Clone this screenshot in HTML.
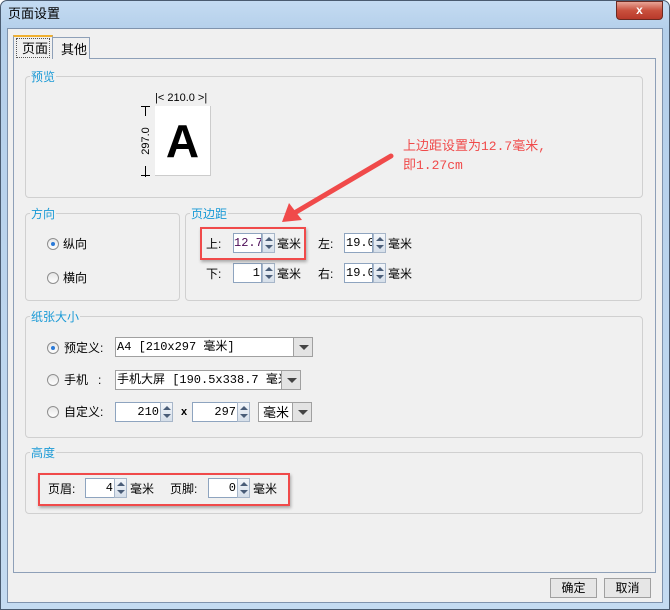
<!DOCTYPE html>
<html><head><meta charset="utf-8"><style>
*{margin:0;padding:0;box-sizing:border-box}
body{width:670px;height:610px;overflow:hidden;background:#fff;font-family:"Liberation Sans","Noto Sans CJK SC",sans-serif;font-size:12px;color:#000;position:relative;line-height:14px}
.abs{position:absolute}
.win{left:0;top:0;width:670px;height:610px;background:linear-gradient(180deg,#c4dbf2 0,#b4cfea 30px,#c4dbf1 100%);border:1px solid #4a5b70;border-radius:7px 7px 0 0}
.client{left:7px;top:28px;width:656px;height:575px;background:#f0f0f0;border:1px solid #7f93ad}
.grp{border:1px solid #d0d0d0;border-radius:4px}
.lg{background:#f0f0f0;color:#1a9ad6;padding:0 1px;font-size:12px}
.inp{background:#fff;border:1px solid #8ea4bf;height:20px;text-align:right;padding:2px 1px 0 0;font-family:"Liberation Mono",monospace;font-size:12px;line-height:14px;overflow:hidden;white-space:nowrap}
.sp{width:13px;height:20px;background:linear-gradient(#f3f6fa,#d6dfea);border:1px solid #a7b6c9}
.sp:before,.sp:after{content:"";position:absolute;left:2px;border-left:4px solid transparent;border-right:4px solid transparent}
.sp:before{top:3px;border-bottom:4px solid #4a5d78}
.sp:after{top:11px;border-top:4px solid #4a5d78}
.combo{background:#fff;border:1px solid #a0a0a0;height:20px;padding:2px 0 0 1px;font-family:"Liberation Mono","Noto Sans CJK SC",monospace;font-size:12px;line-height:14px;white-space:nowrap;overflow:hidden}
.cb{width:20px;height:20px;background:#e3e3e3;border:1px solid #a0a0a0}
.cb:after{content:"";position:absolute;left:5px;top:7px;border-left:5px solid transparent;border-right:5px solid transparent;border-top:5px solid #444}
.radio{width:12px;height:12px;border-radius:50%;border:1px solid #8f8f8f;background:linear-gradient(#e6e6e6,#fff)}
.radio.on:after{content:"";position:absolute;left:3px;top:3px;width:4px;height:4px;border-radius:50%;background:#2a7ad8}
.red{border:2px solid #f04a4a;box-shadow:1px 2px 3px rgba(0,0,0,.3)}
.btn{width:47px;height:20px;border:1px solid #a0a0a0;background:#e6e6e6;text-align:center;line-height:18px}
</style></head><body>
<div class="abs win"></div>
<div class="abs" style="left:8px;top:7px;font-size:13px">页面设置</div>
<div class="abs" style="left:616px;top:1px;width:47px;height:19px;border:1px solid #6b2a22;border-radius:0 0 4px 4px;background:linear-gradient(#e8a597,#c9503d 50%,#b8392a);color:#fff;text-align:center;font-weight:bold;font-size:12px;line-height:17px">x</div>
<div class="abs client"></div>
<div class="abs" style="left:13px;top:58px;width:643px;height:515px;border:1px solid #8ea0b8"></div>
<div class="abs" style="left:52px;top:37px;width:38px;height:22px;border:1px solid #8ea0b8;border-bottom:none;background:#f0f0f0;padding:5px 0 0 8px;font-size:13px">其他</div>
<div class="abs" style="left:13px;top:35px;width:40px;height:24px;border:1px solid #8ea0b8;border-top:2px solid #f0b030;border-bottom:none;background:#f0f0f0;font-size:13px"><div style="margin:1px 2px;border:1px dotted #555;height:20px;padding:3px 0 0 5px">页面</div></div>
<div class="abs grp" style="left:25px;top:76px;width:618px;height:122px"></div>
<div class="abs lg" style="left:30px;top:70px">预览</div>
<div class="abs" style="left:155px;top:91px;font-size:11px;white-space:nowrap">|&lt; 210.0 &gt;|</div>
<div class="abs" style="left:155px;top:106px;width:56px;height:70px;background:#fff;border-right:1px solid #ccc;border-bottom:1px solid #ccc;font-weight:bold;font-size:46px;text-align:center;line-height:70px;font-family:'Liberation Sans',sans-serif">A</div>
<div class="abs" style="left:141px;top:106px;width:9px;height:70px;border-top:1px solid #000;border-bottom:1px solid #000"><div class="abs" style="left:4px;top:0;width:1px;height:70px;background:#000"></div></div>
<div class="abs" style="left:121px;top:134px;width:50px;background:#f0f0f0;font-size:11px;text-align:center;transform:rotate(-90deg)">297.0</div>
<div class="abs grp" style="left:25px;top:213px;width:155px;height:88px"></div>
<div class="abs lg" style="left:30px;top:207px">方向</div>
<div class="abs radio on" style="left:47px;top:238px"></div><div class="abs" style="left:63px;top:237px">纵向</div>
<div class="abs radio" style="left:47px;top:272px"></div><div class="abs" style="left:63px;top:271px">横向</div>
<div class="abs grp" style="left:185px;top:213px;width:457px;height:88px"></div>
<div class="abs lg" style="left:190px;top:207px">页边距</div>
<div class="abs" style="left:206px;top:237px">上:</div><div class="abs inp" style="left:233px;top:233px;width:29px;color:#4b0a55">12.7</div><div class="abs sp" style="left:262px;top:233px"></div><div class="abs" style="left:277px;top:237px">毫米</div>
<div class="abs" style="left:318px;top:237px">左:</div><div class="abs inp" style="left:344px;top:233px;width:29px;text-align:left;padding-left:1px">19.05</div><div class="abs sp" style="left:373px;top:233px"></div><div class="abs" style="left:388px;top:237px">毫米</div>
<div class="abs" style="left:206px;top:267px">下:</div><div class="abs inp" style="left:233px;top:263px;width:29px">1</div><div class="abs sp" style="left:262px;top:263px"></div><div class="abs" style="left:277px;top:267px">毫米</div>
<div class="abs" style="left:318px;top:267px">右:</div><div class="abs inp" style="left:344px;top:263px;width:29px;text-align:left;padding-left:1px">19.05</div><div class="abs sp" style="left:373px;top:263px"></div><div class="abs" style="left:388px;top:267px">毫米</div>
<div class="abs red" style="left:200px;top:227px;width:106px;height:33px"></div>
<div class="abs grp" style="left:25px;top:316px;width:618px;height:122px"></div>
<div class="abs lg" style="left:30px;top:310px">纸张大小</div>
<div class="abs radio on" style="left:47px;top:342px"></div><div class="abs" style="left:64px;top:341px">预定义:</div>
<div class="abs combo" style="left:115px;top:337px;width:179px">A4 [210x297 毫米]</div><div class="abs cb" style="left:293px;top:337px"></div>
<div class="abs radio" style="left:47px;top:374px"></div><div class="abs" style="left:64px;top:373px">手机&nbsp;&nbsp;&nbsp;:</div>
<div class="abs combo" style="left:115px;top:370px;width:167px">手机大屏 [190.5x338.7 毫米]</div><div class="abs cb" style="left:281px;top:370px"></div>
<div class="abs radio" style="left:47px;top:406px"></div><div class="abs" style="left:64px;top:405px">自定义:</div>
<div class="abs inp" style="left:115px;top:402px;width:46px">210</div><div class="abs sp" style="left:160px;top:402px"></div>
<div class="abs" style="left:181px;top:405px;font-weight:bold;font-size:11px">x</div>
<div class="abs inp" style="left:192px;top:402px;width:46px">297</div><div class="abs sp" style="left:237px;top:402px"></div>
<div class="abs combo" style="left:258px;top:402px;width:35px;padding-left:4px;font-family:'Liberation Sans','Noto Sans CJK SC',sans-serif;font-size:13px;line-height:15px">毫米</div><div class="abs cb" style="left:292px;top:402px"></div>
<div class="abs grp" style="left:25px;top:452px;width:618px;height:62px"></div>
<div class="abs lg" style="left:30px;top:446px">高度</div>
<div class="abs" style="left:48px;top:482px">页眉:</div><div class="abs inp" style="left:85px;top:478px;width:30px">4</div><div class="abs sp" style="left:114px;top:478px"></div><div class="abs" style="left:130px;top:482px">毫米</div>
<div class="abs" style="left:170px;top:482px">页脚:</div><div class="abs inp" style="left:208px;top:478px;width:30px">0</div><div class="abs sp" style="left:237px;top:478px"></div><div class="abs" style="left:253px;top:482px">毫米</div>
<div class="abs red" style="left:38px;top:473px;width:252px;height:33px"></div>
<svg class="abs" style="left:0;top:0" width="670" height="610"><line x1="391" y1="156" x2="296" y2="212" stroke="#f04a4a" stroke-width="5" stroke-linecap="round"/><polygon points="282,222 289,203 302,220" fill="#f04a4a"/></svg>
<div class="abs" style="left:403px;top:137px;color:#f04a4a;font-size:13px;font-family:'Liberation Mono','Noto Sans CJK SC',monospace;line-height:19px">上边距设置为12.7毫米,<br>即1.27cm</div>
<div class="abs btn" style="left:550px;top:578px">确定</div>
<div class="abs btn" style="left:604px;top:578px">取消</div>
</body></html>
